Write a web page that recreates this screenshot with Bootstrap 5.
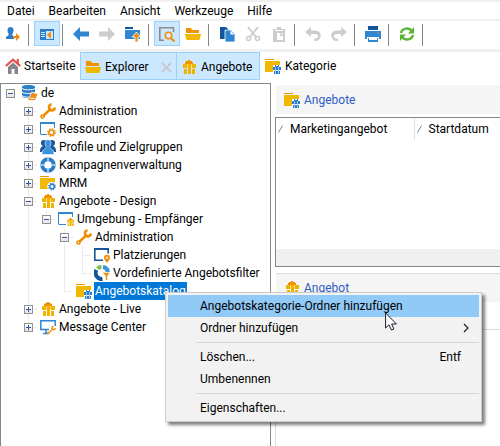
<!DOCTYPE html>
<html lang="de">
<head>
<meta charset="utf-8">
<meta name="viewport" content="width=device-width, initial-scale=1">
<title>Explorer</title>
<link href="https://cdn.jsdelivr.net/npm/bootstrap@5.3.0/dist/css/bootstrap.min.css" rel="stylesheet">
<style>
body{font-family:Roboto,"Open Sans",sans-serif;font-size:12px;line-height:16px;color:#000;background:#fff;overflow:hidden}
button{font:inherit;color:inherit;background:none;border:0;padding:0}
svg{flex:none}
.ic{width:16px;height:16px;display:block}
.strip{background:#f0f0f0;padding:2px 0 3px;gap:2px}
.menubar{height:17px;padding-left:7px;gap:14px}
.menubar a{color:#000;text-decoration:none}
.toolbar{height:28px}
.tool{width:26px;height:25px;display:flex;align-items:center;justify-content:center;border:1px solid transparent}
.on{background:#cce8ff;border:1px solid #99d1ff}
.rule{width:1px;height:22px;background:#85868c;margin:0 5px 0 2px}
.tabs{height:28px;margin-bottom:3px}
.tabs button{display:flex;align-items:center;gap:4px;padding:0 4px;white-space:nowrap;border:1px solid transparent}
.tabs .t1{width:80px;gap:3px}
.tabs .t2{width:97px;padding-top:2px}
.tabs .t3{width:84px;margin-left:-1px;padding-top:2px}
.tabs .on{border-color:#99d1ff}
.tree{flex:0 0 271px;min-width:0;border:1px solid #828790;border-bottom:0}
.tree ul{list-style:none;margin:0;padding:0}
.node{display:flex;height:18px;align-items:center;white-space:nowrap}
.node i{width:18px;height:18px;flex:none;display:flex;align-items:center;justify-content:center;--v:linear-gradient(#ececec,#ececec);background-repeat:no-repeat}
.node .ln{background-image:var(--v);background-size:1px 18px;background-position:9px 0}
.node .te{background-image:var(--v),var(--v);background-size:1px 18px,9px 1px;background-position:9px 0,9px 9px}
.node .el{background-image:var(--v),var(--v);background-size:1px 9px,9px 1px;background-position:9px 0,9px 9px}
.node .ic{margin:0 2px 0 3px}
.node b{font-weight:400;padding:0 1px}
.node .sel{background:#0078d7;color:#fff;outline:1px dotted #0078d7;outline-offset:-1px;line-height:18px}
.exp{width:9px;height:9px;border:1px solid #919191;background:linear-gradient(#fff,#e4e4e4);display:flex;align-items:center;justify-content:center}
.exp::before{content:"";width:5px;height:1px;background:#3b50a8}
.plus::after{content:"";width:1px;height:5px;margin:0 2px 0 -3px;background:#3b50a8}
.side{margin-left:4px;min-width:0;padding-top:2px}
.head{height:29px;background:#f5f5f5;margin:0 0 3px 1px;padding-left:8px;gap:4px;color:#2f5bc4}
.offers{border:1px solid #828790;border-right:0;height:150px}
.offers table{width:100%;table-layout:fixed;border-collapse:collapse}
.offers th{font-weight:400;height:22px;padding:0 0 0 2px;white-space:nowrap}
.offers th+th{border-left:1px solid #e0e0e0}
.offers th span{display:inline-flex;align-items:center;gap:7px}
.offers .c1{width:138px}
.scroll{height:17px;background:#f0f0f0}
.second{border-top:1px solid #dcdcdc;margin-top:6px}
.detail{border:1px solid #dcdcdc;border-width:1px 0 0 1px;margin-top:24px}
.ctx{position:absolute;left:165px;top:292px;width:317px;margin:0;padding:2px;background:#f2f2f2;border:1px solid #ccc;border-radius:0;font-size:12px;color:#000;box-shadow:3px 3px 3px rgba(0,0,0,.5)}
.ctx button{display:flex;align-items:center;justify-content:space-between;width:100%;height:22px;padding:0 18px 0 32px}
.ctx .hot{background:#91c9f7}
.ctx .more{padding-right:5px}
.ctx hr{margin:3px 0 3px 28px;border:0;height:1px;background:#d7d7d7;opacity:1}
.pointer{position:absolute;left:385px;top:312px;width:13px;height:19px;z-index:1100}
</style>
<script src="https://cdn.jsdelivr.net/npm/bootstrap@5.3.0/dist/js/bootstrap.bundle.min.js" defer></script>
</head>
<body>
<svg class="d-none" aria-hidden="true">
<symbol id="gift" viewBox="0 0 16 16"><path fill="#f39200" d="M7 1h2v1h2v1h1v2H4V3h1V2h2z"/><path fill="#f0b400" d="M2 5h13v4H2zM3 10h3v5H3zM7 9h3v6H7zM11 10h3v5h-3z"/><path fill="#f8d878" d="M6 5h1v4H6zM10 5h1v4h-1z"/></symbol>
<symbol id="gift-blue" viewBox="0 0 8 10"><path fill="#fff" d="M0 1h8v9H0z"/><path fill="#2b7ccd" d="M2 1h1v1h2V1h1v2H2zM0 3h8v3H0zM1 7h6v3H1z"/><path fill="#9cc6ec" d="M2 3h1v7H2zM5 3h1v7H5z"/></symbol>
<symbol id="folder" viewBox="0 0 16 16"><path fill="#f39200" d="M1 2h5l1 2h7v3H1z"/><path fill="#f0b900" d="M0 8h16l-1.500 6h-13z"/></symbol>
<symbol id="folder-plain" viewBox="0 0 16 16"><path fill="#f39200" d="M0 1h9v1H0z"/><path fill="#f0b900" d="M0 3h15v11H0z"/></symbol>
<symbol id="folder-gift" viewBox="0 0 16 16"><use href="#folder-plain"/><use href="#gift-blue" x="8" y="6" width="8" height="10"/></symbol>
<symbol id="wrench" viewBox="0 0 16 16"><path fill="none" stroke="#f08c00" stroke-width="2.400" stroke-linecap="round" d="M2 14l8-7.500"/><path fill="none" stroke="#f08c00" stroke-width="2.600" d="M11.500 1.200C8.500 2 8.500 5 10 6.500S14.500 7.500 15 4.500"/><circle cx="2.500" cy="13.500" r="2.300" fill="#f08c00"/><circle cx="2.500" cy="13.500" r=".7" fill="#fff"/></symbol>
<symbol id="win" viewBox="0 0 16 16"><path fill="none" stroke="#2f86d2" d="M.5 13V2h14v7M.5 13.500h8"/><path fill="#2f86d2" d="M0 1h15v2H0z"/></symbol>
<symbol id="gear" viewBox="0 0 16 16"><circle cx="8" cy="8" r="4.500" fill="#fff" stroke="currentColor" stroke-width="3"/><circle cx="8" cy="8" r="6.500" fill="none" stroke="currentColor" stroke-width="2.600" stroke-dasharray="2.600 2.500"/></symbol>
<symbol id="win-gear" viewBox="0 0 16 16"><use href="#win"/><path fill="#fff" d="M7 7h9v9H7z"/><use href="#gear" x="7" y="7" width="9" height="9" color="#ef8e10"/></symbol>
<symbol id="win-gift" viewBox="0 0 16 16"><use href="#win"/><path fill="#fff" d="M8 6h8v10H8z"/><use href="#gift" x="8" y="6" width="9" height="10"/></symbol>
<symbol id="people" viewBox="0 0 16 16"><g fill="#14549a"><circle cx="4" cy="4" r="3"/><circle cx="12" cy="4" r="3"/><path d="M0 13c0-4 1-5 3-6h10c2 1 3 2 3 6z"/></g><path fill="#3d92dc" stroke="#fff" stroke-width=".6" d="M5 4c0-4.500 6-4.500 6 0 0 2-.8 3.300-1.500 4 0 1.600 4.500 1.500 4.500 7.500H2C2 9.500 6.500 9.600 6.500 8 5.800 7.300 5 6 5 4z"/></symbol>
<symbol id="ring" viewBox="0 0 16 16"><circle cx="8" cy="8" r="5.800" fill="none" stroke="#2b7ec9" stroke-width="4"/><path stroke="#fff" stroke-width="1" d="M8 0v4M8 12v4M0 8h4M12 8h4"/></symbol>
<symbol id="folder-gear" viewBox="0 0 16 16"><use href="#folder-plain"/><circle cx="12" cy="11.500" r="4.800" fill="#fff"/><use href="#gear" x="8" y="7" width="8" height="9" color="#2f86d2"/></symbol>
<symbol id="db" viewBox="0 0 16 16"><path fill="#2b7ec9" d="M0 2c0-2.600 13-2.600 13 0v9c0 3-13 3-13 0z"/><path fill="none" stroke="#fff" d="M0 3.300c1 2 12 2 13 0M0 7c1 2 12 2 13 0M0 10.500c1 1.500 5 2 7 1.500"/><path fill="#ef8e10" stroke="#fff" stroke-width=".7" d="M9.500 7l6.500 2-3 6.500H7c-1.500-1-.5-3 .5-3z"/><path stroke="#fff" d="M8 13.300h4.500"/></symbol>
<symbol id="place" viewBox="0 0 16 16"><path fill="none" stroke="#14549a" stroke-width="1.600" d="M9 13.200H.8V2h13.400v4.500"/><path fill="#14549a" d="M0 1h15v2H0z"/><path fill="#ef8e10" d="M13 16c-2-2.700-3-3.800-3-5.300a3 3 0 016 0c0 1.500-1 2.600-3 5.300z"/><circle cx="13" cy="10.700" r="1" fill="#fff"/></symbol>
<symbol id="filter" viewBox="0 0 16 16"><g fill="none" stroke-width="4"><path stroke="#7cc043" d="M3.500 3.500A6 6 0 017.500 2"/><path stroke="#3d92dc" d="M9 2.100A6 6 0 0114 7"/><path stroke="#14549a" d="M2.500 5A6 6 0 008.500 14"/></g><path fill="#ef8e10" stroke="#fff" stroke-width=".5" d="M8.500 7.500H16L13.500 11v5l-2-1.500V11z"/></symbol>
<symbol id="monitor" viewBox="0 0 16 16"><path fill="none" stroke="#2f86d2" stroke-width="1.500" d="M9 10.500H.8V1.800h14.400V7M3 14.500h5M6 11v3"/><use href="#wrench" x="7" y="6" width="9" height="10"/></symbol>
<symbol id="undo" viewBox="0 0 16 16"><path d="M0 6l6-5v3.500h4c8 0 7 9.500 1 10.500H9v-2.500c5 .5 5.500-4.500 1-4.500H6V11z"/></symbol>
<symbol id="sort" viewBox="0 0 5 8"><path stroke="#777" stroke-width=".9" d="M.5 7.500l4-7"/></symbol>
</svg>

<div class="d-flex flex-column vh-100 position-relative">
<header class="strip d-flex flex-column">
<nav class="menubar bg-white d-flex align-items-center" aria-label="Menü"><a href="#">Datei</a><a href="#">Bearbeiten</a><a href="#">Ansicht</a><a href="#">Werkzeuge</a><a href="#">Hilfe</a></nav>
<div class="toolbar bg-white d-flex align-items-start" role="toolbar" aria-label="Werkzeugleiste">
<button class="tool" aria-label="Verbinden"><svg class="ic" viewBox="0 0 16 16"><path fill="#2b7ec9" d="M2.500 4c0-4 6-4 6 0 0 2-.5 3-1.300 4 0 1.500 1 2 1.800 2.500V13H1v-2c1-.8 2.800-1.500 2.800-3C3 7 2.500 6 2.500 4z"/><path fill="#ef8e10" d="M8 10h3V7l4 4-4 4v-3H8z"/></svg></button>
<span class="rule align-self-center"></span>
<button class="tool on" aria-label="Navigation"><svg class="ic" viewBox="0 0 16 16"><path fill="#2b7ec9" d="M1 3h14v11H1z"/><path fill="#cce8ff" d="M7 5h7v8H7z"/><path stroke="#cce8ff" d="M2 6.500h4M2 8.500h4M2 10.500h4"/><path fill="#ef8e10" d="M12 5v8L8 9z"/></svg></button>
<span class="rule align-self-center"></span>
<button class="tool" aria-label="Zurück"><svg class="ic" viewBox="0 0 16 16"><path fill="#2f86d2" d="M0 8l7-7v4.500h9v5H7V15z"/></svg></button>
<button class="tool" aria-label="Vor"><svg class="ic" viewBox="0 0 16 16"><path fill="#cdcdcd" d="M16 8L9 1v4.500H0v5h9V15z"/></svg></button>
<button class="tool" aria-label="Übergeordneter Ordner"><svg class="ic" viewBox="0 0 16 16"><path fill="#14549a" d="M0 1h8v2H0z"/><path fill="#2f86d2" d="M0 4h15v9H0z"/><path fill="#ef8e10" stroke="#fff" stroke-width=".8" d="M11.500 6l4.500 5h-3v5h-3v-5H7z"/></svg></button>
<span class="rule align-self-center"></span>
<button class="tool on" aria-label="Suchen"><svg class="ic" viewBox="0 0 16 16"><path fill="none" stroke="#8a8a90" stroke-width="1.600" d="M5 14.200H.8V1.800h13.700V6"/><circle cx="9.500" cy="9.500" r="3.200" fill="#dceeff" stroke="#ef8e10" stroke-width="1.600"/><path stroke="#ef8e10" stroke-width="2.200" d="M12 12l3.500 3.500"/></svg></button>
<button class="tool" aria-label="Öffnen"><svg class="ic"><use href="#folder"/></svg></button>
<span class="rule align-self-center"></span>
<button class="tool" aria-label="Kopieren"><svg class="ic" viewBox="0 0 16 16"><path fill="#14549a" d="M1 1h6l3 3v9H1z"/><path fill="#2f86d2" stroke="#fff" stroke-width=".8" d="M6 4h6l4 4v8H6z"/><path fill="#fff" d="M11.500 4.500v4h4z"/></svg></button>
<button class="tool" aria-label="Ausschneiden"><svg class="ic" viewBox="0 0 16 16"><path stroke="#cdcdcd" stroke-width="2" d="M3 1l8 10M13 1L5 11"/><g fill="none" stroke="#cdcdcd" stroke-width="1.600"><circle cx="3.500" cy="12.500" r="2"/><circle cx="12.500" cy="12.500" r="2"/></g></svg></button>
<button class="tool" aria-label="Einfügen"><svg class="ic" viewBox="0 0 16 16"><path fill="#cdcdcd" d="M2 3h4V1h4v2h4v13H2z"/><path fill="#fff" d="M4 4h8v1H4zM6 7h3v3h3v4H6zM10 7l2 2h-2z"/></svg></button>
<span class="rule align-self-center"></span>
<button class="tool" aria-label="Rückgängig"><svg class="ic" fill="#cdcdcd"><use href="#undo"/></svg></button>
<button class="tool" aria-label="Wiederholen"><svg class="ic" viewBox="0 0 16 16" fill="#cdcdcd"><path d="M16 6l-6-5v3.500H6C-2 4.500-1 14 5 15h2v-2.500c-5 .5-5.500-4.500-1-4.500h4V11z"/></svg></button>
<span class="rule align-self-center"></span>
<button class="tool" aria-label="Drucken"><svg class="ic" viewBox="0 0 16 16"><path fill="#14549a" d="M3 0h10v4H3z"/><path fill="#2f86d2" d="M0 5h16v8h-2v-2H2v2H0zM3 12h10v4H3z"/><path fill="#fff" d="M4 11h8v3H4z"/><path fill="#ef8e10" d="M12 6.500h2v1h-2z"/></svg></button>
<span class="rule align-self-center"></span>
<button class="tool" aria-label="Aktualisieren"><svg class="ic" viewBox="0 0 16 16"><path fill="none" stroke="#5cb531" stroke-width="2.400" d="M2 7c1-5 8-6 11-2M14 9c-1 5-8 6-11 2"/><path fill="#5cb531" d="M15 1v6.500H9zM1 15V8.500h6z"/></svg></button>
<span class="rule align-self-center"></span>
</div>
</header>

<div class="tabs d-flex" role="tablist">
<button class="t1" role="tab"><svg class="ic" viewBox="0 0 16 16"><path fill="none" stroke="#e2514e" stroke-width="2.200" d="M.8 8L8 1.600 15.200 8M12.800 1v5"/><path fill="#85868c" d="M3 9l5-4.500L13 9v7h-3.500v-5h-3v5H3z"/></svg>Startseite</button>
<button class="t2 on" role="tab"><svg class="ic"><use href="#folder"/></svg>Explorer<svg class="ms-auto" width="11" height="11" viewBox="0 0 11 11"><path stroke="#c5ccd2" stroke-width="2" d="M1 1l9 9M10 1l-9 9"/></svg></button>
<button class="t3 on" role="tab"><svg class="ic"><use href="#gift"/></svg>Angebote</button>
<button role="tab"><svg class="ic"><use href="#folder-gift"/></svg>Kategorie</button>
</div>

<main class="d-flex flex-grow-1">
<nav class="tree" aria-label="Ordner">
<ul>
<li class="node"><i><button class="exp" aria-label="Zuklappen"></button></i><svg class="ic"><use href="#db"/></svg><b>de</b></li>
<li class="node"><i></i><i class="te"><button class="exp plus" aria-label="Aufklappen"></button></i><svg class="ic"><use href="#wrench"/></svg><b>Administration</b></li>
<li class="node"><i></i><i class="te"><button class="exp plus" aria-label="Aufklappen"></button></i><svg class="ic"><use href="#win-gear"/></svg><b>Ressourcen</b></li>
<li class="node"><i></i><i class="te"><button class="exp plus" aria-label="Aufklappen"></button></i><svg class="ic"><use href="#people"/></svg><b>Profile und Zielgruppen</b></li>
<li class="node"><i></i><i class="te"><button class="exp plus" aria-label="Aufklappen"></button></i><svg class="ic"><use href="#ring"/></svg><b>Kampagnenverwaltung</b></li>
<li class="node"><i></i><i class="te"><button class="exp plus" aria-label="Aufklappen"></button></i><svg class="ic"><use href="#folder-gear"/></svg><b>MRM</b></li>
<li class="node"><i></i><i class="te"><button class="exp" aria-label="Zuklappen"></button></i><svg class="ic"><use href="#gift"/></svg><b>Angebote - Design</b></li>
<li class="node"><i></i><i class="ln"></i><i class="el"><button class="exp" aria-label="Zuklappen"></button></i><svg class="ic"><use href="#win-gift"/></svg><b>Umgebung - Empfänger</b></li>
<li class="node"><i></i><i class="ln"></i><i></i><i class="te"><button class="exp" aria-label="Zuklappen"></button></i><svg class="ic"><use href="#wrench"/></svg><b>Administration</b></li>
<li class="node"><i></i><i class="ln"></i><i></i><i class="ln"></i><i class="te"></i><svg class="ic"><use href="#place"/></svg><b>Platzierungen</b></li>
<li class="node"><i></i><i class="ln"></i><i></i><i class="ln"></i><i class="el"></i><svg class="ic"><use href="#filter"/></svg><b>Vordefinierte Angebotsfilter</b></li>
<li class="node"><i></i><i class="ln"></i><i></i><i class="el"></i><svg class="ic"><use href="#folder-gift"/></svg><b class="sel">Angebotskatalog</b></li>
<li class="node"><i></i><i class="te"><button class="exp plus" aria-label="Aufklappen"></button></i><svg class="ic"><use href="#gift"/></svg><b>Angebote - Live</b></li>
<li class="node"><i></i><i class="el"><button class="exp plus" aria-label="Aufklappen"></button></i><svg class="ic"><use href="#monitor"/></svg><b>Message Center</b></li>
</ul>
</nav>
<section class="side flex-grow-1 d-flex flex-column">
<div class="head d-flex align-items-center"><svg class="ic"><use href="#folder-gift"/></svg>Angebote</div>
<div class="offers d-flex flex-column justify-content-between">
<table><thead><tr><th class="c1"><span><svg width="5" height="8"><use href="#sort"/></svg>Marketingangebot</span></th><th><span><svg width="5" height="8"><use href="#sort"/></svg>Startdatum</span></th></tr></thead></table>
<div class="scroll"></div>
</div>
<div class="head second d-flex align-items-center"><svg class="ic"><use href="#gift"/></svg>Angebot</div>
<div class="detail flex-grow-1"></div>
</section>
</main>

<div class="ctx dropdown-menu show" role="menu">
<button class="hot" role="menuitem">Angebotskategorie-Ordner hinzufügen</button>
<button class="more" role="menuitem">Ordner hinzufügen<svg width="14" height="10" viewBox="0 0 14 10"><path fill="none" stroke="#222" stroke-width="1.200" d="M4 1l4 4-4 4"/></svg></button>
<hr>
<button role="menuitem">Löschen...<span>Entf</span></button>
<button role="menuitem">Umbenennen</button>
<hr>
<button role="menuitem">Eigenschaften...</button>
</div>
<svg class="pointer" viewBox="0 0 13 19" aria-hidden="true"><path fill="#fff" stroke="#1a1a2a" d="M.6 1v15l3.400-3.200L6.500 18l2.400-1-2.300-5h4.800z"/></svg>
</div>
</body>
</html>
